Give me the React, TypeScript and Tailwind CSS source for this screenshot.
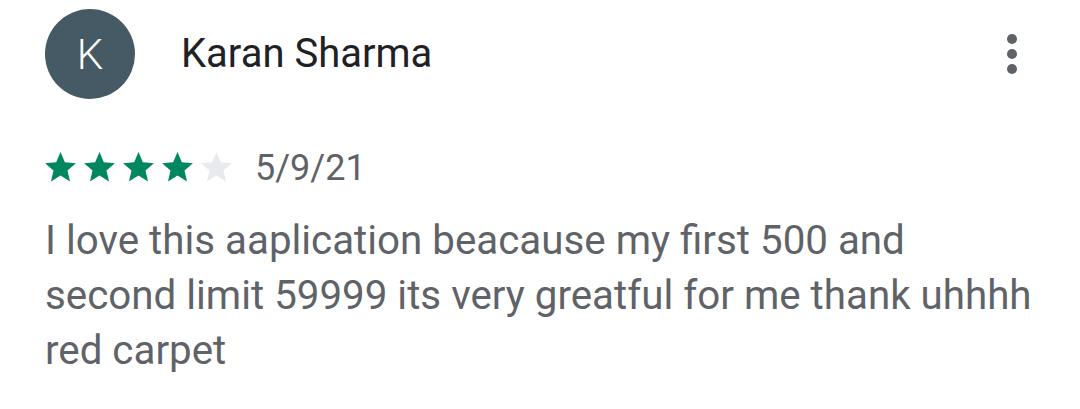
import React from "react";

const STAR = "M12 17.27L18.18 21l-1.64-7.03L22 9.24l-7.19-.61L12 2 9.19 8.63 2 9.24l5.46 4.73L5.82 21z";

function Star({ filled }: { filled: boolean }) {
    return (
        <svg width="37" height="37" viewBox="0 0 24 24" className={filled ? "fill-[#01875f]" : "fill-[#e8eaed]"}>
            <path d={STAR} />
        </svg>
    );
}

export default function App() {
    const rating = 4;

    return (
        <div className="w-[1080px] h-[409px] bg-white font-['Roboto',sans-serif] overflow-hidden">
            <div className="pl-[45px] pr-[48px]">
                {/* header */}
                <div className="flex items-center pt-[9px]">
                    <div className="w-[90px] h-[90px] rounded-full bg-[#455a64] flex items-center justify-center text-white text-[42px] font-light">
                        K
                    </div>
                    <div className="ml-[46px] text-[40px] text-[#202124] flex-1">Karan Sharma</div>
                    <button className="w-[40px] h-[48px] flex flex-col items-center justify-center gap-[5px]">
                        <span className="w-[10px] h-[10px] rounded-full bg-[#5f6368]" />
                        <span className="w-[10px] h-[10px] rounded-full bg-[#5f6368]" />
                        <span className="w-[10px] h-[10px] rounded-full bg-[#5f6368]" />
                    </button>
                </div>

                {/* rating + date */}
                <div className="flex items-center mt-[50px] -ml-[3px]">
                    <div className="flex gap-[2px]">
                        {[0, 1, 2, 3, 4].map(i => (
                            <Star key={i} filled={i < rating} />
                        ))}
                    </div>
                    <span className="ml-[20px] text-[36px] text-[#5f6368] leading-none">5/9/21</span>
                </div>

                {/* review text */}
                <p className="mt-[27px] text-[40.3px] leading-[55px] text-[#5f6368] whitespace-nowrap">
                    I love this aaplication beacause my first 500 and
                    <br />
                    second limit 59999 its very greatful for me thank uhhhh
                    <br />
                    red carpet
                </p>
            </div>
        </div>
    );
}
